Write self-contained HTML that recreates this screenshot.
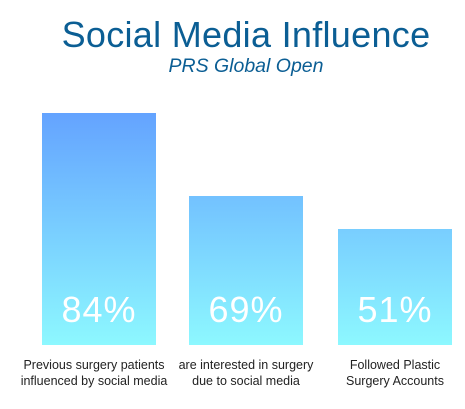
<!DOCTYPE html>
<html><head><style>
body{margin:0;width:465px;height:409px;background:#fff;position:relative;font-family:"Liberation Sans",Arial,sans-serif;overflow:hidden}
.t{position:absolute;left:0;width:492px;text-align:center;top:14px;font-size:36px;color:#0b5e94;letter-spacing:0.3px}
.s{position:absolute;left:0;width:492px;text-align:center;top:55px;font-size:19.5px;font-style:italic;color:#0b5e94}
.b{position:absolute;width:114px;bottom:64px;background:linear-gradient(#64a3ff,#8df8ff);background-size:100% 232px;background-position:bottom;color:#fff;font-size:36px;text-align:center;letter-spacing:1px}
.b span{position:absolute;left:0;right:0;bottom:14px}
.l{position:absolute;top:358px;font-size:12.5px;color:#222;text-align:center;line-height:15.5px;width:160px}
</style></head><body>
<div class="t">Social Media Influence</div>
<div class="s">PRS Global Open</div>
<div class="b" style="left:42px;height:232px"><span>84%</span></div>
<div class="b" style="left:189px;height:149px"><span>69%</span></div>
<div class="b" style="left:338px;height:116px"><span>51%</span></div>
<div class="l" style="left:14px">Previous surgery patients<br>influenced by social media</div>
<div class="l" style="left:166px">are interested in surgery<br>due to social media</div>
<div class="l" style="left:315px">Followed Plastic<br>Surgery Accounts</div>
</body></html>
